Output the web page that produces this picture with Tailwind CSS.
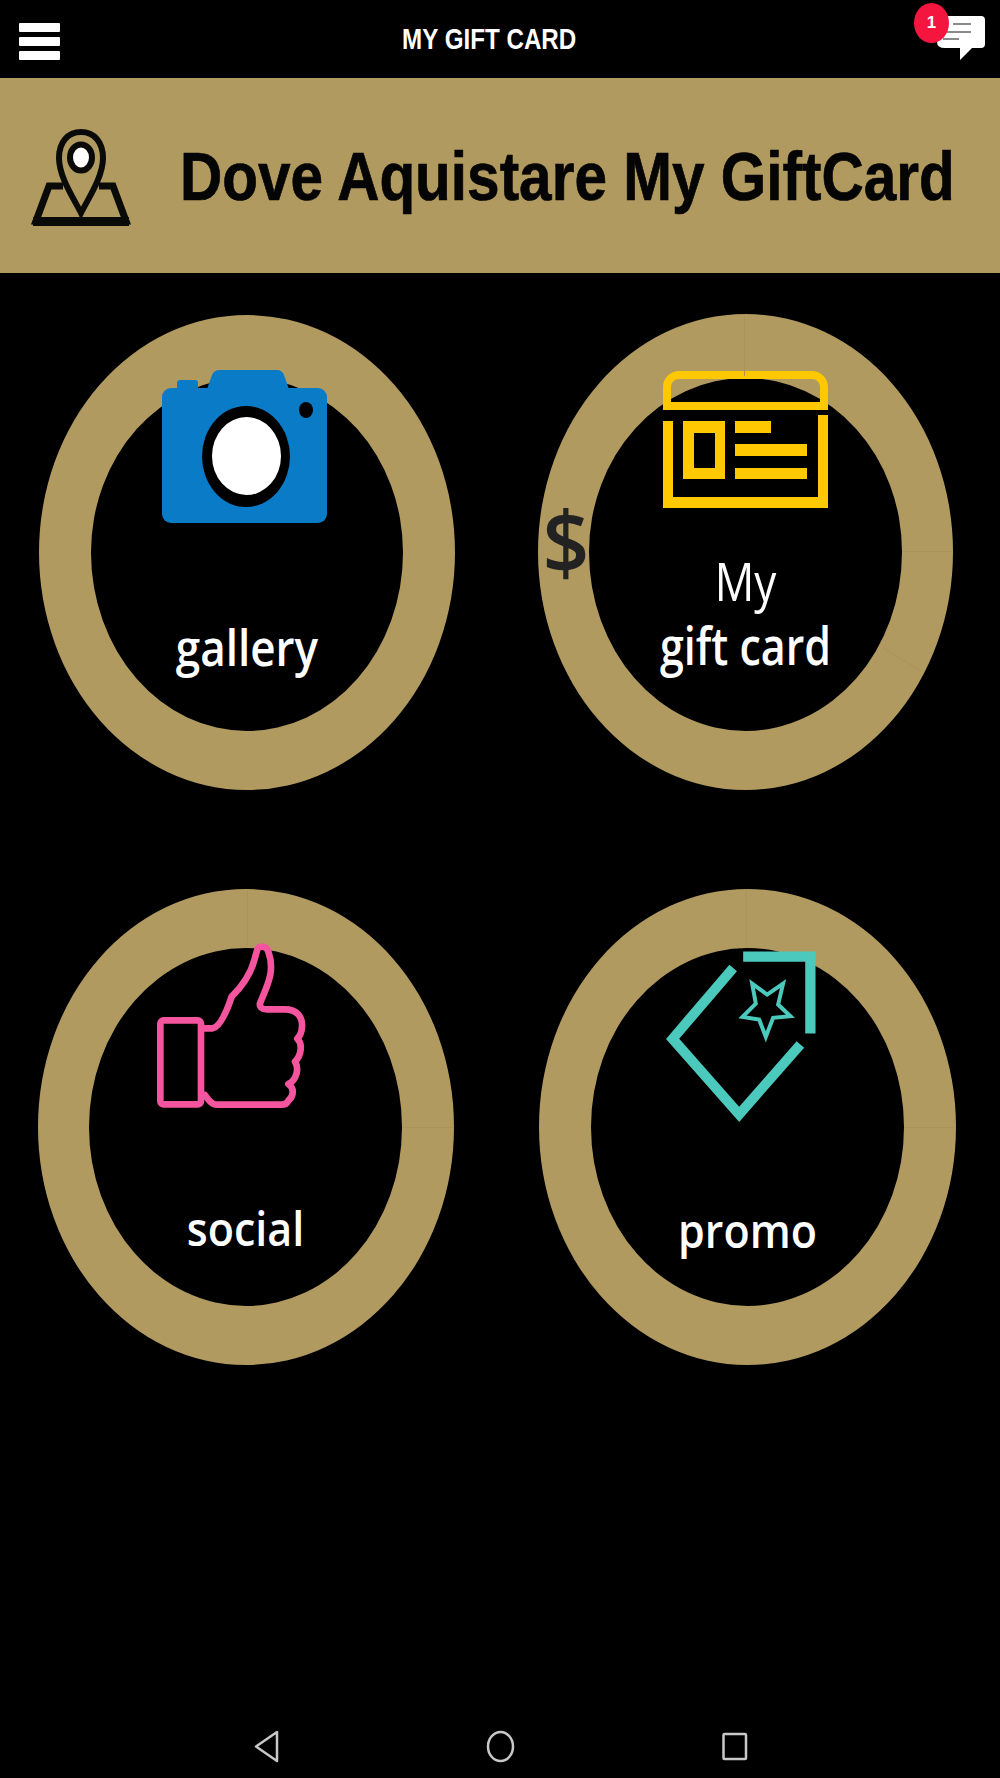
<!DOCTYPE html>
<html lang="en">
<head>
  <meta charset="UTF-8" />
  <meta name="viewport" content="width=device-width, initial-scale=1.0"/>
  <title>My Gift Card</title>
  <script src="https://cdn.jsdelivr.net/npm/@tailwindcss/browser@4"></script>
</head>
<body class="bg-black">
  <div class="w-[1000px] h-[1778px] bg-black flex flex-col overflow-hidden font-['Open_Sans']">
    <!-- Top bar -->
    <header class="h-[78px] flex items-center shrink-0">
      <div class="ml-[19px] mt-[5px] w-[41px] flex flex-col gap-[5px]">
        <span class="h-[9px] bg-white rounded-[1px]"></span>
        <span class="h-[9px] bg-white rounded-[1px]"></span>
        <span class="h-[9px] bg-white rounded-[1px]"></span>
      </div>
      <h1 class="ml-[336px] w-[174px] text-center whitespace-nowrap text-white font-['Liberation_Sans'] font-bold text-[26px] leading-[30px] scale-y-[1.14] scale-x-[0.93]">MY GIFT CARD</h1>
      <div class="relative ml-[320px] w-[95px] h-[70px] -mt-[8px]">
        <svg viewBox="0 0 110 70" class="w-[110px] h-[70px] absolute left-0 top-0">
          <path d="M47 24 Q47 16 55 16 H91 Q95 16 95 20 V44 Q95 48 91 48 H82 L70 60 V48 H55 Q47 48 47 42 Z" fill="#fff"/>
          <path d="M63 24 H81 M57 32 H81 M53 39 H69" stroke="#8a8a8a" stroke-width="2" fill="none"/>
          <ellipse cx="41.5" cy="23" rx="17.5" ry="20" fill="#f4163f"/>
        </svg>
        <span class="absolute left-[29px] top-[10px] w-[25px] text-center text-white font-['Liberation_Sans'] font-bold text-[17px] leading-[26px]">1</span>
      </div>
    </header>

    <!-- Banner -->
    <section class="h-[195px] bg-[#b19a5f] flex items-center shrink-0">
      <svg viewBox="0 0 140 130" class="w-[140px] h-[130px] ml-[10px] shrink-0">
        <path d="M53 75 H39 L26 110 H116 L103 75 H89" fill="none" stroke="#0a0a08" stroke-width="7"/>
        <path d="M23 110.5 H119" stroke="#0a0a08" stroke-width="9"/>
        <path d="M71 102 C64 88 49 66 49 47 C49 31 58 21 71 21 C84 21 93 31 93 47 C93 66 78 88 71 102 Z" fill="#b19a5f" stroke="#0a0a08" stroke-width="6"/>
        <ellipse cx="71" cy="46.5" rx="11" ry="13" fill="#fff" stroke="#0a0a08" stroke-width="6"/>
      </svg>
      <h2 class="ml-[30px] mt-[1px] whitespace-nowrap text-[#050505] font-['Liberation_Sans'] font-bold text-[58.5px] leading-[70px] scale-y-[1.18] [-webkit-text-stroke:0.6px_#050505]">Dove Aquistare My GiftCard</h2>
    </section>

    <!-- Menu -->
    <main class="flex-1 flex flex-col">
      <div class="flex pt-[41px] pl-[39px] items-start">
        <div class="relative mt-[1px] w-[416px] h-[475px] rounded-[50%] border-x-[52px] border-t-[63px] border-b-[59px] border-[#b19a5f] flex flex-col items-center">
          <svg viewBox="0 0 165 153" class="w-[165px] h-[153px] shrink-0 -mt-[8px] -ml-[6px]">
            <path d="M44 22 L50 5 Q52 0 58 0 H115 Q120 0 122 5 L128 22 Z" fill="#0a7bc6"/>
            <path d="M15 22 V13 Q15 10 18 10 H33 Q36 10 36 13 V22 Z" fill="#0a7bc6"/>
            <rect x="0" y="18" width="165" height="135" rx="9" fill="#0a7bc6"/>
            <ellipse cx="84" cy="86.5" rx="44" ry="50.5" fill="#000"/>
            <ellipse cx="84.5" cy="86" rx="34.5" ry="39" fill="#fff"/>
            <ellipse cx="144" cy="40" rx="7" ry="8" fill="#000"/>
          </svg>
          <span class="mt-[100px] text-white font-semibold text-[44px] leading-[48px] scale-y-[1.14]">gallery</span>
        </div>
        <div class="relative ml-[83px] w-[415px] h-[476px] rounded-[50%] border-x-[51px] border-t-[64px] border-b-[59px] border-[#b19a5f] flex flex-col items-center">
          <span class="absolute left-[155px] -top-[64px] w-px h-[62px] bg-[#aa9459]"></span>
          <span class="absolute left-full top-[173px] w-[51px] h-px bg-[#aa9459]"></span>
          <span class="absolute left-[291px] top-[281px] w-[44px] h-px bg-[#aa9459] rotate-[31deg]"></span>
          <svg viewBox="0 0 165 137" class="w-[165px] h-[137px] shrink-0 -mt-[7px]" fill="#ffc800">
            <path d="M4 39 V16 A12 12 0 0 1 16 4 H149 A12 12 0 0 1 161 16 V39 M0 35 H165" fill="none" stroke="#ffc800" stroke-width="8"/>
            <path d="M0 50 H10 V126 H155 V44 H165 V137 H0 Z"/>
            <path fill-rule="evenodd" d="M20 50 H62 V108 H20 Z M31 62 V97 H52 V62 Z"/>
            <rect x="72" y="50" width="36" height="12"/>
            <rect x="72" y="73" width="72" height="12"/>
            <rect x="72" y="97" width="72" height="11"/>
          </svg>
          <span class="mt-[48px] text-white text-[44px] leading-[50px] scale-y-[1.2]">My</span>
          <span class="mt-[15px] whitespace-nowrap text-white font-semibold text-[43px] leading-[50px] scale-y-[1.2]">gift card</span>
          <span class="absolute -left-[47px] top-[122px] w-[48px] text-center text-[#222222] font-semibold text-[82px] leading-[80px] scale-y-[1.06]">$</span>
        </div>
      </div>

      <div class="flex pt-[99px] pl-[38px] items-start">
        <div class="relative w-[416px] h-[476px] rounded-[50%] border-l-[51px] border-r-[52px] border-y-[59px] border-[#b19a5f] flex flex-col items-center">
          <span class="absolute left-[158px] -top-[59px] w-px h-[58px] bg-[#aa9459]"></span>
          <span class="absolute left-full top-[179px] w-[52px] h-px bg-[#aa9459]"></span>
          <svg viewBox="390 180 480 522" class="w-[160px] h-[174px] shrink-0 -mt-[8px] -ml-[31px]" fill="none" stroke="#f5559f" stroke-width="20" stroke-linejoin="round" stroke-linecap="round">
            <rect x="421" y="421" width="122" height="252" rx="10"/>
            <path d="M552 445 L578 445 C600 440 620 395 635 350 C660 325 690 290 703 240 L712 208 C720 195 740 198 745 215 C765 270 745 310 722 365 C715 380 725 388 740 388 L795 388 C830 388 848 410 846 440 C845 460 838 470 832 476 C848 490 845 525 825 545 C838 565 830 600 805 612 C825 625 820 650 805 662 C800 672 795 674 785 674 L590 674 C575 674 565 660 555 645"/>
          </svg>
          <span class="mt-[90px] text-white font-semibold text-[43px] leading-[48px] scale-y-[1.1]">social</span>
        </div>
        <div class="relative ml-[85px] w-[417px] h-[476px] rounded-[50%] border-x-[52px] border-y-[59px] border-[#b19a5f] flex flex-col items-center">
          <span class="absolute left-[155px] -top-[59px] w-px h-[58px] bg-[#aa9459]"></span>
          <span class="absolute left-full top-[179px] w-[52px] h-px bg-[#aa9459]"></span>
          <svg viewBox="430 190 470 550" class="w-[157px] h-[183px] shrink-0 -mt-[5px] -ml-[12px]" fill="none" stroke="#4cc9bd">
            <path d="M670 231 H872 V462" stroke-width="31"/>
            <path d="M640 265 L458 478 L658 705 L842 495" stroke-width="30"/>
            <path d="M697 312 L742 345 L790 312 L775 375 L812 410 L760 415 L738 472 L718 420 L668 412 L708 372 Z" stroke-width="12"/>
          </svg>
          <span class="mt-[80px] text-white font-semibold text-[43px] leading-[48px] scale-y-[1.1]">promo</span>
        </div>
      </div>
    </main>

    <!-- Android nav -->
    <nav class="h-[68px] shrink-0 flex items-start pt-[20px] pl-[254px] gap-[207px]">
      <svg viewBox="0 0 25 33" class="w-[25px] h-[33px]" fill="none" stroke="#c8c8c8" stroke-width="2.5" stroke-linejoin="round">
        <path d="M23 2 V31 L2 16.5 Z"/>
      </svg>
      <svg viewBox="0 0 29 33" class="w-[29px] h-[33px]" fill="none" stroke="#c8c8c8" stroke-width="2.5">
        <ellipse cx="14.5" cy="16.5" rx="12.5" ry="14.5"/>
      </svg>
      <svg viewBox="0 0 26 29" class="w-[26px] h-[29px] mt-[2px]" fill="none" stroke="#c8c8c8" stroke-width="2.5" stroke-linejoin="round">
        <rect x="1.5" y="2" width="22.5" height="25" rx="1"/>
      </svg>
    </nav>
  </div>
</body>
</html>
